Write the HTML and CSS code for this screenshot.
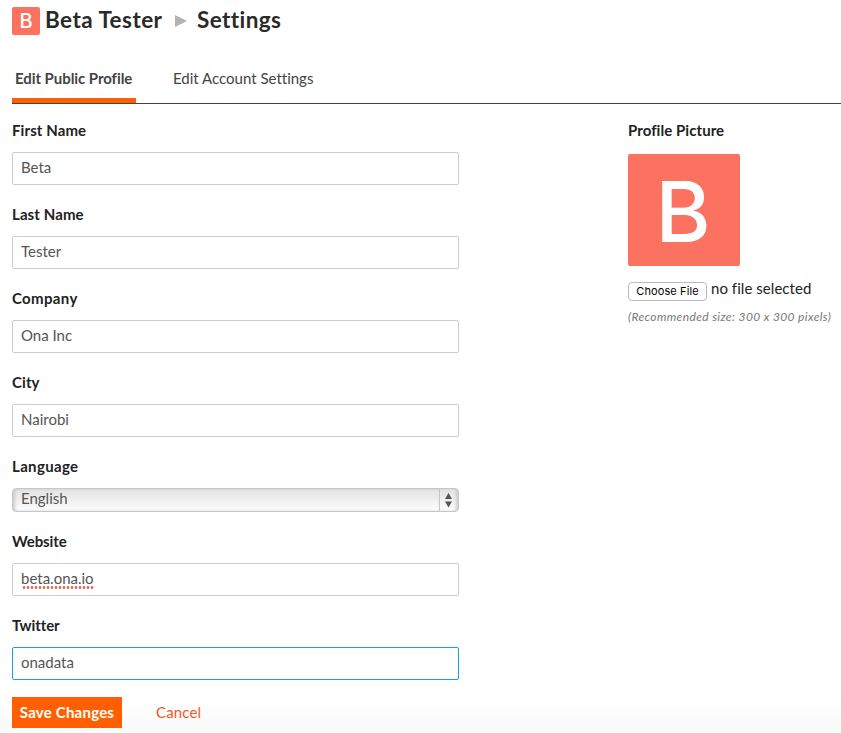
FILE: index.html
```html
<!DOCTYPE html>
<html lang="en">
<head>
<meta charset="utf-8">
<title>Settings</title>
<link rel="stylesheet" href="styles.css">
</head>
<body>
<header class="crumbs">
  <span class="avatar avatar-small">B</span>
  <span class="crumb crumb-user">Beta Tester</span>
  <svg class="arrow" width="12" height="12" viewBox="0 0 12 12"><path d="M0 0L12 6L0 12Z" fill="#b3b3b3"/></svg>
  <span class="crumb crumb-page">Settings</span>
</header>
<nav class="tabs">
  <a class="tab active">Edit Public Profile</a>
  <a class="tab">Edit Account Settings</a>
</nav>
<main class="content">
  <form class="profile">
    <div class="field"><label for="first">First Name</label><input id="first" value="Beta"></div>
    <div class="field"><label for="last">Last Name</label><input id="last" value="Tester"></div>
    <div class="field"><label class="wide" for="company">Company</label><input id="company" value="Ona Inc"></div>
    <div class="field"><label for="city">City</label><input id="city" value="Nairobi"></div>
    <div class="field">
      <label class="wide">Language</label>
      <div class="select">
        <span class="select-value">English</span>
        <span class="select-arrows"><svg width="7" height="15" viewBox="0 0 7 15"><path d="M3.5 0L7 6H0ZM0 8.5H7L3.5 14.5Z" fill="#555"/></svg></span>
      </div>
    </div>
    <div class="field misspelled"><label class="narrow" for="website">Website</label><input id="website" value="beta.ona.io"></div>
    <div class="field"><label class="narrow" for="twitter">Twitter</label><input id="twitter" class="focused" value="onadata"></div>
    <div class="actions">
      <button type="button" class="save">Save Changes</button>
      <a class="cancel">Cancel</a>
    </div>
  </form>
  <aside class="picture">
    <div class="picture-title">Profile Picture</div>
    <div class="avatar avatar-large">B</div>
    <div class="file"><button type="button" class="choose">Choose File</button><span class="no-file">no file selected</span></div>
    <div class="hint">(Recommended size: 300 x 300 pixels)</div>
  </aside>
</main>
</body>
</html>
```
FILE: styles.css
```css
* { box-sizing: border-box; }
html { height: 100%; background: #fff; }
body {
  margin: 0;
  height: 733px;
  padding: 7px 0 0 12px;
  overflow: hidden;
  font: 15px/20px Lato, "Open Sans", sans-serif;
  font-variant-ligatures: none;
  color: #222;
  background: linear-gradient(#fff 700px, #f9f9f9 733px);
}
.crumbs { display: flex; align-items: center; height: 28px; white-space: nowrap; }
.crumb { font-size: 22.5px; line-height: 26px; padding-bottom: 2px; font-weight: 700; color: #2a2a2a; }
.crumb-user { margin-left: 5px; width: 118px; letter-spacing: 0.45px; }
.crumb-page { letter-spacing: 0.4px; }
.arrow { margin: 0 10px 0 12px; }
.avatar {
  display: flex;
  align-items: center;
  justify-content: center;
  background: #fb7360;
  color: #fff;
  font-family: Inter, sans-serif;
}
.avatar-small { width: 28px; height: 28px; border-radius: 2px; font-size: 20px; font-weight: 500; }
.avatar-large { width: 112px; height: 112px; margin-top: 13px; border-radius: 2px; font-size: 84px; font-weight: 500; padding: 4px 2px 0 0; }
.tabs { display: flex; height: 45px; margin-top: 24px; border-bottom: 1px solid #444; white-space: nowrap; }
.tab { padding: 9px 3px 0; color: #444; margin-right: 34px; }
.active { width: 124px; font-weight: 700; border-bottom: 5px solid #ff5f00; letter-spacing: -0.06px; }
.content { display: flex; padding-top: 17px; }
.profile { width: 447px; margin-right: 169px; }
.field { margin-bottom: 20px; }
label { display: block; width: max-content; line-height: 18px; margin-bottom: 13px; font-weight: 700; letter-spacing: 0.1px; }
.wide { letter-spacing: 0.35px; }
.narrow { letter-spacing: -0.1px; }
input {
  display: block;
  width: 447px;
  height: 33px;
  padding: 0 8px 3px;
  border: 1px solid #ccc;
  border-radius: 2px;
  outline: 0;
  background: #fff;
  color: #555;
  font: inherit;
}
.misspelled { position: relative; }
.misspelled::after {
  content: "";
  position: absolute;
  left: 10px;
  bottom: 7px;
  width: 72px;
  height: 3px;
  background: radial-gradient(circle, #f0573d 1px, transparent 1.6px) 0 0 / 4px 3px;
}
.focused { border-color: #189fe0; }
.select {
  display: flex;
  height: 24px;
  border: 1px solid #c6c6c6;
  border-radius: 4px;
  background: linear-gradient(#e2e2e2, #fdfdfd);
  box-shadow: inset 3px 0 3px -1px #ccc, inset -3px 0 3px -1px #ccc;
  color: #555;
}
.select-value { flex: 1; padding-left: 8px; }
.select-value { line-height: 19px; }
.select-arrows { display: flex; align-items: center; justify-content: center; width: 19px; padding-right: 1px; border-left: 1px solid #c4c4c4; }
.actions { display: flex; align-items: center; margin-top: -3px; }
.save { width: 110px; height: 31px; padding: 0 0 1px; border: 0; background: #ff5f00; color: #fff; font: 700 15px/30px Lato, sans-serif; letter-spacing: 0.22px; white-space: nowrap; }
.cancel { margin-left: 34px; padding-bottom: 2px; color: #f4571c; letter-spacing: 0.15px; }
.picture { width: 213px; white-space: nowrap; }
.picture-title { line-height: 18px; padding-bottom: 2px; font-weight: 700; letter-spacing: 0.06px; }
.file { display: flex; height: 20px; margin-top: 15px; }
.choose {
  width: 79px;
  height: 19px;
  margin: 1px 4px 0 0;
  padding: 0 0 1px;
  border: 1px solid #bbb;
  border-radius: 4px;
  background: #fff;
  color: #000;
  font: 11px/15px Inter, sans-serif;
  letter-spacing: 0.1px;
}
.no-file { line-height: 15px; letter-spacing: 0.05px; }
.hint { margin-top: 7px; font-size: 12px; line-height: 18px; font-style: italic; letter-spacing: 0.38px; color: #777; }
```
